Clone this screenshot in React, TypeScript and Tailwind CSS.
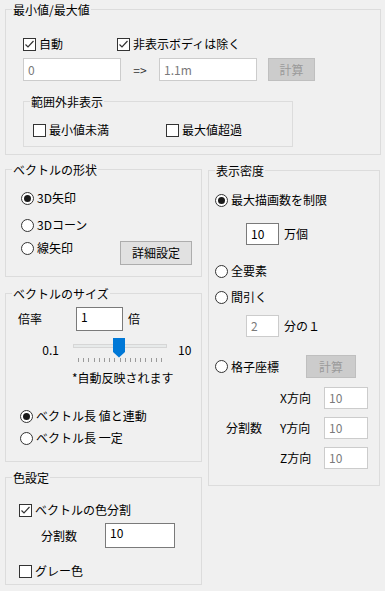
import React from "react";

const font = { fontFamily: '"Noto Sans CJK JP", "Noto Sans", sans-serif' };

function Group({ title, className, children }: { title: string; className: string; children: React.ReactNode }) {
  return (
    <div className={"relative border border-[#dcdcdc] " + className}>
      <span className="absolute top-[-8px] left-[6px] px-[1px] bg-[#f0f0f0] leading-[16px]">{title}</span>
      {children}
    </div>
  );
}

function Check({ checked, label }: { checked?: boolean; label: string }) {
  return (
    <div className="flex items-center h-[16px]">
      <div className="w-[13px] h-[13px] border border-[#333] bg-white flex items-center justify-center">
        {checked && (
          <svg width="11" height="11" viewBox="0 0 11 11">
            <path d="M1.5 5.5 L4 8 L9.5 2" fill="none" stroke="#333" strokeWidth="1.2" />
          </svg>
        )}
      </div>
      <span className="ml-[3px] leading-[16px]">{label}</span>
    </div>
  );
}

function Radio({ checked, label }: { checked?: boolean; label: string }) {
  return (
    <div className="flex items-center h-[16px]">
      <div className="w-[13px] h-[13px] rounded-full border border-[#333] bg-white flex items-center justify-center">
        {checked && <div className="w-[7px] h-[7px] rounded-full bg-[#1a1a1a]" />}
      </div>
      <span className="ml-[3px] leading-[16px]">{label}</span>
    </div>
  );
}

function Field({ value, disabled, className }: { value: string; disabled?: boolean; className: string }) {
  return (
    <div
      className={
        "bg-white border flex items-center pl-[4px] leading-none " +
        (disabled ? "border-[#cccccc] text-[#7a7a7a] " : "border-[#7a7a7a] text-black ") +
        className
      }
    >
      {value}
    </div>
  );
}

function DisabledButton({ label, className }: { label: string; className: string }) {
  return (
    <div className={"bg-[#cccccc] border border-[#bfbfbf] text-[#9a9a9a] flex items-center justify-center " + className}>
      {label}
    </div>
  );
}

export default function App() {
  const ticks = Array.from({ length: 17 }, (_, i) => i);
  return (
    <div className="w-[385px] h-[591px] bg-[#f0f0f0] text-[12px] text-black pt-[9px] pl-[5px]" style={font}>
      <Group title="最小値/最大値" className="w-[376px] h-[146px] pl-[17px]">
        <div className="flex mt-[26px]">
          <div className="w-[94px]">
            <Check checked label="自動" />
          </div>
          <Check checked label="非表示ボディは除く" />
        </div>
        <div className="flex items-center mt-[6px]">
          <Field value="0" disabled className="w-[98px] h-[23px]" />
          <span className="w-[38px] text-center text-[#333]">=&gt;</span>
          <Field value="1.1m" disabled className="w-[98px] h-[23px]" />
          <DisabledButton label="計算" className="ml-[11px] w-[47px] h-[23px]" />
        </div>
        <Group title="範囲外非表示" className="mt-[20px] w-[270px] h-[46px] pl-[9px]">
          <div className="flex mt-[20px]">
            <div className="w-[133px]">
              <Check label="最小値未満" />
            </div>
            <Check label="最大値超過" />
          </div>
        </Group>
      </Group>

      <div className="flex mt-[14px] items-start">
        <div className="flex flex-col w-[197px]">
          <Group title="ベクトルの形状" className="h-[108px] pl-[15px]">
            <div className="mt-[20px]">
              <Radio checked label="3D矢印" />
            </div>
            <div className="mt-[11px]">
              <Radio label="3Dコーン" />
            </div>
            <div className="flex items-start mt-[7px]">
              <div className="w-[99px]">
                <Radio label="線矢印" />
              </div>
              <div className="mt-[1px] w-[72px] h-[24px] bg-[#e1e1e1] border border-[#adadad] flex items-center justify-center">
                詳細設定
              </div>
            </div>
          </Group>

          <Group title="ベクトルのサイズ" className="mt-[16px] h-[169px] pl-[12px]">
            <div className="flex items-center mt-[13px]">
              <span className="w-[58px]">倍率</span>
              <Field value="1" className="w-[47px] h-[24px] items-start pt-[3px]" />
              <span className="ml-[5px]">倍</span>
            </div>
            <div className="flex items-start mt-[7px] h-[20px]">
              <span className="w-[44px] text-right pr-[3px] mt-[4px] leading-[16px]">0.1</span>
              <div className="relative ml-[11px] w-[94px] h-[20px]">
                <div className="absolute left-0 right-0 top-[6px] h-[4px] bg-[#e7eaea] border border-[#d6d6d6]" />
                <svg className="absolute left-[40px] top-0" width="12" height="20" viewBox="0 0 12 20">
                  <path d="M0 0 H12 V14 L6 19.5 L0 14 Z" fill="#0078d7" />
                </svg>
              </div>
              <span className="ml-[11px] mt-[4px] leading-[16px]">10</span>
            </div>
            <div className="flex justify-between w-[84px] ml-[60px] h-[5px]">
              {ticks.map((t) => (
                <div key={t} className="w-[1px] h-[4px] bg-[#9a9a9a]" />
              ))}
            </div>
            <div className="ml-[54px] mt-[7px] leading-[16px]">*自動反映されます</div>
            <div className="ml-[2px] mt-[22px]">
              <Radio checked label="ベクトル長 値と連動" />
            </div>
            <div className="ml-[2px] mt-[6px]">
              <Radio label="ベクトル長 一定" />
            </div>
          </Group>

          <Group title="色設定" className="mt-[15px] h-[108px] pl-[13px]">
            <div className="mt-[24px]">
              <Check checked label="ベクトルの色分割" />
            </div>
            <div className="flex items-center mt-[5px]">
              <span className="ml-[22px] w-[64px]">分割数</span>
              <Field value="10" className="w-[70px] h-[25px] items-start pt-[3px]" />
            </div>
            <div className="mt-[15px]">
              <Check label="グレー色" />
            </div>
          </Group>
        </div>

        <Group title="表示密度" className="ml-[6px] mt-[1px] w-[172px] h-[316px] pl-[6px]">
          <div className="mt-[21px]">
            <Radio checked label="最大描画数を制限" />
          </div>
          <div className="flex items-center mt-[15px] ml-[31px]">
            <Field value="10" className="w-[33px] h-[22px]" />
            <span className="ml-[5px]">万個</span>
          </div>
          <div className="mt-[18px]">
            <Radio label="全要素" />
          </div>
          <div className="mt-[10px]">
            <Radio label="間引く" />
          </div>
          <div className="flex items-center mt-[10px] ml-[31px]">
            <Field value="2" disabled className="w-[33px] h-[22px]" />
            <span className="ml-[5px]">分の１</span>
          </div>
          <div className="flex items-center mt-[18px] h-[23px]">
            <div className="w-[91px]">
              <Radio label="格子座標" />
            </div>
            <DisabledButton label="計算" className="w-[50px] h-[23px]" />
          </div>
          <div className="flex items-center mt-[9px]">
            <span className="ml-[11px] w-[54px]">分割数</span>
            <div className="flex flex-col gap-[8px]">
              {["X方向", "Y方向", "Z方向"].map((l) => (
                <div key={l} className="flex items-center">
                  <span className="w-[44px]">{l}</span>
                  <Field value="10" disabled className="w-[44px] h-[22px]" />
                </div>
              ))}
            </div>
          </div>
        </Group>
      </div>
    </div>
  );
}
